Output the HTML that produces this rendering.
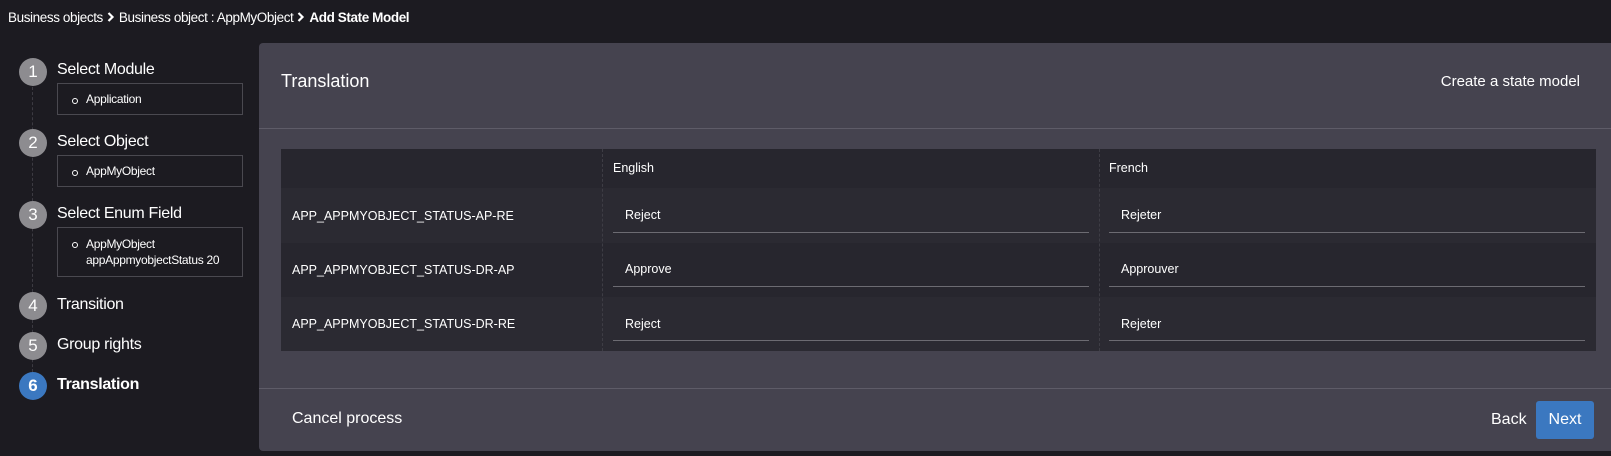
<!DOCTYPE html>
<html><head><style>
*{margin:0;padding:0;box-sizing:border-box}
body{width:1611px;height:456px;background:#1c1b21;font-family:"Liberation Sans",sans-serif;color:#fff;position:relative;overflow:hidden}
.a{position:absolute;white-space:nowrap}
.c{position:absolute;left:19px;width:28px;height:28px;border-radius:50%;background:#8d8c90;color:#fff;font-size:17px;text-align:center;line-height:28px}
.st{position:absolute;left:57px;font-size:16px;letter-spacing:-0.3px}
.box{position:absolute;left:57px;width:186px;border:1px solid #4a4950;font-size:12px;padding:0 0 0 28px;letter-spacing:-0.3px}
.box:before{content:"";position:absolute;left:14px;top:14px;width:4px;height:4px;border:1px solid #fff;border-radius:50%}
.dash{position:absolute;left:32px;border-left:1px dashed #3c3b42}
.row{position:absolute;left:281px;width:1315px}
.k{position:absolute;left:11px;font-size:12.5px}
.in{position:absolute;height:1px;background:#6c6b72}
.v{position:absolute;font-size:12.5px}
.ch{display:inline-block;vertical-align:middle;margin:0 4px 2px 4px}
</style></head><body>
<div class="a" style="left:8px;top:10px;font-size:13.5px;letter-spacing:-0.4px">Business objects<svg class="ch" width="8" height="10" viewBox="0 0 8 10"><path d="M1.5 1l4 4-4 4" stroke="#fff" stroke-width="2.2" fill="none"/></svg>Business object : AppMyObject<svg class="ch" width="8" height="10" viewBox="0 0 8 10"><path d="M1.5 1l4 4-4 4" stroke="#fff" stroke-width="2.2" fill="none"/></svg><b>Add State Model</b></div>

<div class="dash" style="top:87px;height:205px"></div>
<div class="dash" style="top:320px;height:52px"></div>
<div class="c" style="top:58px">1</div><div class="st" style="top:61px">Select Module</div>
<div class="box" style="top:83px;height:32px;line-height:30px">Application</div>
<div class="c" style="top:129px">2</div><div class="st" style="top:133px">Select Object</div>
<div class="box" style="top:155px;height:32px;line-height:30px">AppMyObject</div>
<div class="c" style="top:201px">3</div><div class="st" style="top:205px">Select Enum Field</div>
<div class="box" style="top:227px;height:50px;line-height:16px;padding-top:8px">AppMyObject<br>appAppmyobjectStatus 20</div>
<div class="c" style="top:292px">4</div><div class="st" style="top:296px">Transition</div>
<div class="c" style="top:332px">5</div><div class="st" style="top:336px">Group rights</div>
<div class="c" style="top:372px;background:#3b78c0;font-weight:bold">6</div><div class="st" style="top:376px;font-weight:bold">Translation</div>

<div class="a" style="left:259px;top:43px;width:1352px;height:408px;background:#45434f;border-radius:4px 0 0 4px"></div>
<div class="a" style="left:259px;top:128px;width:1352px;height:1px;background:#5e5c68"></div>
<div class="a" style="left:259px;top:388px;width:1352px;height:1px;background:#5e5c68"></div>
<div class="a" style="left:281px;top:71px;font-size:18px">Translation</div>
<div class="a" style="right:31px;top:73px;font-size:15px">Create a state model</div>

<div class="row" style="top:149px;height:39px;background:#27262e"></div>
<div class="row" style="top:188px;height:55px;background:#2b2a32"></div>
<div class="row" style="top:243px;height:54px;background:#27262e"></div>
<div class="row" style="top:297px;height:54px;background:#2b2a32"></div>
<div class="a" style="left:602px;top:149px;height:202px;border-left:1px dashed #3e3d45"></div>
<div class="a" style="left:1099px;top:149px;height:202px;border-left:1px dashed #3e3d45"></div>
<div class="a" style="left:613px;top:161px;font-size:12.5px">English</div>
<div class="a" style="left:1109px;top:161px;font-size:12.5px">French</div>

<div class="row" style="top:188px;height:55px;background:none">
<div class="k" style="top:21px">APP_APPMYOBJECT_STATUS-AP-RE</div>
<div class="v" style="left:344px;top:20px">Reject</div><div class="in" style="left:332px;width:476px;top:44px"></div>
<div class="v" style="left:840px;top:20px">Rejeter</div><div class="in" style="left:828px;width:476px;top:44px"></div>
</div>
<div class="row" style="top:243px;height:54px;background:none">
<div class="k" style="top:20px">APP_APPMYOBJECT_STATUS-DR-AP</div>
<div class="v" style="left:344px;top:19px">Approve</div><div class="in" style="left:332px;width:476px;top:43px"></div>
<div class="v" style="left:840px;top:19px">Approuver</div><div class="in" style="left:828px;width:476px;top:43px"></div>
</div>
<div class="row" style="top:297px;height:54px;background:none">
<div class="k" style="top:20px">APP_APPMYOBJECT_STATUS-DR-RE</div>
<div class="v" style="left:344px;top:20px">Reject</div><div class="in" style="left:332px;width:476px;top:43px"></div>
<div class="v" style="left:840px;top:20px">Rejeter</div><div class="in" style="left:828px;width:476px;top:43px"></div>
</div>

<div class="a" style="left:292px;top:410px;font-size:16px">Cancel process</div>
<div class="a" style="left:1491px;top:411px;font-size:16px">Back</div>
<div class="a" style="left:1536px;top:401px;width:58px;height:38px;background:#3b78c0;border-radius:3px;font-size:16px;text-align:center;line-height:38px">Next</div>
</body></html>
